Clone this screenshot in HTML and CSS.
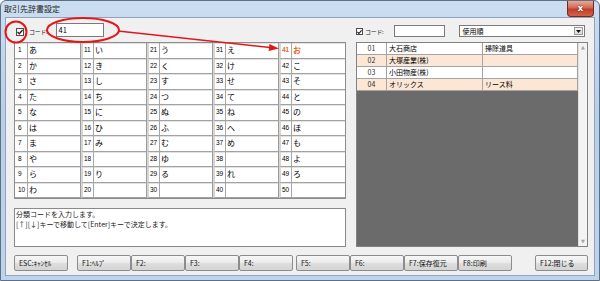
FILE: index.html
```html
<!DOCTYPE html>
<html lang="ja">

<head>
    <meta charset="UTF-8">
    <title>取引先辞書設定</title>
    <link rel="stylesheet" href="styles.css">
</head>

<body>
    <div class="window">
        <div class="titlebar">
            <span class="title">取引先辞書設定</span>
            <span class="close-btn">x</span>
        </div>

        <div class="client">
            <div class="main">
                <div class="left">
                    <div class="toolbar">
                        <span class="check"><svg width="6" height="6" viewBox="0 0 6 6"><path d="M0.5 3 L2.3 4.8 L5.5 1" fill="none" stroke="#1a1a1a" stroke-width="1.3"/></svg></span>
                        <span class="label">コード:</span>
                        <span class="textbox code-input">41</span>
                    </div>

                    <div class="kana-grid">
                        <span class="n">1</span><span class="k">あ</span><span class="n">11</span><span class="k">い</span><span class="n">21</span><span class="k">う</span><span class="n">31</span><span class="k">え</span><span class="n current">41</span><span class="k current">お</span>
                        <span class="n">2</span><span class="k">か</span><span class="n">12</span><span class="k">き</span><span class="n">22</span><span class="k">く</span><span class="n">32</span><span class="k">け</span><span class="n">42</span><span class="k">こ</span>
                        <span class="n">3</span><span class="k">さ</span><span class="n">13</span><span class="k">し</span><span class="n">23</span><span class="k">す</span><span class="n">33</span><span class="k">せ</span><span class="n">43</span><span class="k">そ</span>
                        <span class="n">4</span><span class="k">た</span><span class="n">14</span><span class="k">ち</span><span class="n">24</span><span class="k">つ</span><span class="n">34</span><span class="k">て</span><span class="n">44</span><span class="k">と</span>
                        <span class="n">5</span><span class="k">な</span><span class="n">15</span><span class="k">に</span><span class="n">25</span><span class="k">ぬ</span><span class="n">35</span><span class="k">ね</span><span class="n">45</span><span class="k">の</span>
                        <span class="n">6</span><span class="k">は</span><span class="n">16</span><span class="k">ひ</span><span class="n">26</span><span class="k">ふ</span><span class="n">36</span><span class="k">へ</span><span class="n">46</span><span class="k">ほ</span>
                        <span class="n">7</span><span class="k">ま</span><span class="n">17</span><span class="k">み</span><span class="n">27</span><span class="k">む</span><span class="n">37</span><span class="k">め</span><span class="n">47</span><span class="k">も</span>
                        <span class="n">8</span><span class="k">や</span><span class="n">18</span><span class="k"></span><span class="n">28</span><span class="k">ゆ</span><span class="n">38</span><span class="k"></span><span class="n">48</span><span class="k">よ</span>
                        <span class="n">9</span><span class="k">ら</span><span class="n">19</span><span class="k">り</span><span class="n">29</span><span class="k">る</span><span class="n">39</span><span class="k">れ</span><span class="n">49</span><span class="k">ろ</span>
                        <span class="n">10</span><span class="k">わ</span><span class="n">20</span><span class="k"></span><span class="n">30</span><span class="k"></span><span class="n">40</span><span class="k"></span><span class="n">50</span><span class="k"></span>
                    </div>

                    <div class="message">分類コードを入力します。<br>[↑][↓]キーで移動して[Enter]キーで決定します。</div>
                </div>

                <div class="right">
                    <div class="toolbar">
                        <span class="check small"><svg width="6" height="6" viewBox="0 0 6 6"><path d="M0.5 3 L2.3 4.8 L5.5 1" fill="none" stroke="#1a1a1a" stroke-width="1.3"/></svg></span>
                        <span class="label">コード:</span>
                        <span class="textbox search-input"></span>
                        <span class="select">
                            <span class="select-text">使用順</span>
                            <span class="select-arrow"><svg width="5" height="3" viewBox="0 0 5 3"><path d="M0 0 H5 L2.5 3 Z" fill="#111"/></svg></span>
                        </span>
                    </div>

                    <div class="list">
                        <div class="list-body">
                            <div class="list-row"><span class="c-code">01</span><span class="c-name">大石商店</span><span class="c-note">掃除道具</span></div>
                            <div class="list-row alt"><span class="c-code">02</span><span class="c-name">大塚産業(株)</span><span class="c-note"></span></div>
                            <div class="list-row"><span class="c-code">03</span><span class="c-name">小田物産(株)</span><span class="c-note"></span></div>
                            <div class="list-row alt"><span class="c-code">04</span><span class="c-name">オリックス</span><span class="c-note">リース料</span></div>
                        </div>
                        <div class="scrollbar">
                            <span class="arrow">▲</span>
                            <span class="arrow">▼</span>
                        </div>
                    </div>
                </div>
            </div>

            <div class="fkeys">
                <span class="fkey">ESC:ｷｬﾝｾﾙ</span>
                <span class="fkey f1">F1:ﾍﾙﾌﾟ</span>
                <span class="fkey">F2:</span>
                <span class="fkey">F3:</span>
                <span class="fkey">F4:</span>
                <span class="fkey f5">F5:</span>
                <span class="fkey">F6:</span>
                <span class="fkey">F7:保存復元</span>
                <span class="fkey">F8:印刷</span>
                <span class="fkey f12">F12:閉じる</span>
            </div>
        </div>

        <!-- red annotation marks drawn over the dialog -->
        <svg class="annotations" width="600" height="281" viewBox="0 0 600 281">
            <circle cx="16" cy="32" r="10.5" fill="none" stroke="#e3161c" stroke-width="2"/>
            <ellipse cx="83" cy="30" rx="36" ry="12" fill="none" stroke="#e3161c" stroke-width="2"/>
            <line x1="118" y1="31" x2="270" y2="47.5" stroke="#e3161c" stroke-width="1.6"/>
            <polygon points="279,48.5 268.7,50.9 269.4,43.9" fill="#e3161c"/>
        </svg>
    </div>
</body>

</html>
```

FILE: styles.css
```css
* {
    box-sizing: border-box;
}

body {
    margin: 0;
    font-family: "Noto Sans CJK JP", "Liberation Sans", sans-serif;
    color: #000;
}

.window {
    position: relative;
    width: 600px;
    height: 281px;
    display: flex;
    flex-direction: column;
    background: linear-gradient(#cbdef1, #b8cfe8 40%, #bed4eb);
    border: 1px solid #5f7085;
    border-radius: 6px 6px 0 0;
}

.titlebar {
    height: 16px;
    display: flex;
    align-items: flex-start;
}

.title {
    padding: 3px 0 0 3px;
    font-size: 8px;
    line-height: 10px;
    color: #1c1c1c;
}

.close-btn {
    margin-left: auto;
    margin-right: 5px;
    width: 27px;
    height: 16px;
    border: 1px solid #6e2c22;
    border-top: none;
    border-radius: 0 0 4px 4px;
    background: linear-gradient(#e9a899, #d06a55 45%, #bf3f28 55%, #d8604a);
    color: #fff;
    font-family: "DejaVu Sans", sans-serif;
    font-weight: bold;
    font-size: 9px;
    line-height: 14px;
    text-align: center;
    text-shadow: 0 0 1px #4a1a12, 0 0 1px #4a1a12;
}

.client {
    flex: 1;
    margin: 0 4px 4px 4px;
    padding: 5px 6px 0 8px;
    border: 1px solid #8ea4bc;
    background-color: #f0f0f0;
}

.main {
    display: grid;
    grid-template-columns: 332px 232px;
    column-gap: 10px;
}

.toolbar {
    height: 19px;
    display: flex;
    align-items: flex-start;
    font-size: 7px;
}

.check {
    flex-shrink: 0;
    width: 8px;
    height: 8px;
    margin: 5px 5px 0 2px;
    border: 1px solid #4d4d4d;
    background-color: #fff;
    display: flex;
    align-items: center;
    justify-content: center;
}

.check.small {
    margin-left: 0;
    margin-right: 2px;
    width: 7px;
    height: 7px;
}

.label {
    flex-shrink: 0;
    margin-top: 4px;
    font-size: 6px;
    line-height: 10px;
    white-space: nowrap;
    letter-spacing: -0.3px;
    color: #222;
}

.textbox {
    flex-shrink: 0;
    height: 14px;
    border: 1px solid #7a7a7a;
    background-color: #fff;
    font-size: 7.5px;
    line-height: 12px;
    padding-left: 1px;
}

.code-input {
    width: 48px;
    margin-left: 9px;
}

.search-input {
    width: 51px;
    height: 12px;
    margin: 2px 0 0 11px;
}

.select {
    flex-shrink: 0;
    width: 126px;
    height: 12px;
    margin: 2px 0 0 14px;
    border: 1px solid #7a7a7a;
    background-color: #fff;
    display: flex;
    align-items: center;
    justify-content: space-between;
}

.select-text {
    padding-left: 2px;
    line-height: 10px;
}

.select-arrow {
    width: 9px;
    height: 8px;
    margin-right: 1px;
    border: 1px solid #9a9a9a;
    background: linear-gradient(#f6f6f6, #dcdcdc);
    display: flex;
    align-items: center;
    justify-content: center;
}

/* 50-sound code grid */
.kana-grid {
    height: 157px;
    display: grid;
    grid-template-columns: repeat(5, 13px 53px);
    grid-template-rows: repeat(10, 1fr);
    border: 1px solid #8c8c8c;
    background-color: #fff;
}

.kana-grid span {
    display: flex;
    align-items: center;
    border-bottom: 1px solid #a2a2a2;
    box-shadow: inset 0 1px 0 #e2e2e2;
    line-height: 10px;
    white-space: nowrap;
    overflow: hidden;
}

.kana-grid .n {
    font-family: "Liberation Sans", sans-serif;
    font-size: 6.5px;
    letter-spacing: -0.2px;
    padding-left: 1px;
    border-right: 1px solid #a8a8a8;
    border-left: 2px solid #d6d6d6;
}

.kana-grid .n:nth-child(10n+1) {
    border-left: none;
    padding-left: 3px;
}

.kana-grid .k {
    font-size: 8px;
    padding-left: 1px;
    border-right: 1px solid #9c9c9c;
}

.kana-grid .k:nth-child(10n) {
    border-right: none;
}

.kana-grid .current {
    color: #ea6a1e;
    font-weight: bold;
}

.message {
    height: 39px;
    margin-top: 9px;
    padding: 1px 1px;
    border: 1px solid #8a8a8a;
    background-color: #fff;
    font-size: 7px;
    line-height: 9.5px;
    color: #1a1a1a;
}

/* supplier list */
.list {
    height: 205px;
    display: flex;
    border: 1px solid #828282;
}

.list-body {
    flex: 1;
    background-color: #6b6b6b;
}

.list-row {
    height: 12px;
    display: grid;
    grid-template-columns: 30px 96px 1fr;
    background-color: #fff;
    border-bottom: 1px solid #a4a4a4;
    font-size: 7px;
    line-height: 11px;
}

.list-row.alt {
    background-color: #fce6d5;
}

.list-row span {
    padding-left: 2px;
    border-right: 1px solid #a4a4a4;
    white-space: nowrap;
}

.list-row .c-code {
    text-align: center;
    padding-left: 0;
    color: #333;
}

.scrollbar {
    width: 9px;
    display: flex;
    flex-direction: column;
    justify-content: space-between;
    align-items: center;
    background-color: #f3f3f3;
    border-left: 1px solid #e0e0e0;
}

.scrollbar .arrow {
    font-family: "DejaVu Sans", sans-serif;
    font-size: 5px;
    line-height: 9px;
    color: #a6a6a6;
}

/* function key buttons */
.fkeys {
    display: flex;
    margin-top: 8px;
}

.fkey {
    width: 54px;
    height: 16px;
    padding-left: 4px;
    display: flex;
    align-items: center;
    border: 1px solid #8c8c8c;
    border-radius: 2px;
    background: linear-gradient(#f7f7f7, #ececec 45%, #dddddd 55%, #d4d4d4);
    font-size: 7px;
    line-height: 10px;
    white-space: nowrap;
    color: #111;
}

.fkey.f1 {
    margin-left: 9px;
}

.fkey.f5 {
    margin-left: 3px;
}

.fkey.f12 {
    margin-left: 23px;
    width: 53px;
}

.annotations {
    position: absolute;
    top: -1px;
    left: -1px;
    pointer-events: none;
}
```
